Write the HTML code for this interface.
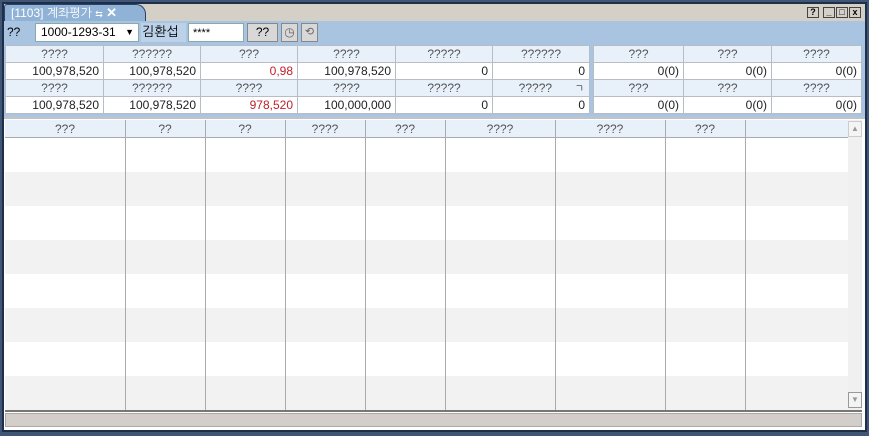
<!DOCTYPE html>
<html><head><meta charset="utf-8"><style>
*{margin:0;padding:0;box-sizing:border-box}
body{width:869px;height:436px;background:#3f5676;font-family:"Liberation Sans","NanumGothic",sans-serif;font-size:12px;position:relative;overflow:hidden}
.a{position:absolute}
.t{position:absolute;border-collapse:collapse;table-layout:fixed;background:#fff}
.t td{border:1px solid #b8bcc4;height:17px;padding:0 4px;font-size:12px;color:#222;white-space:nowrap}
.t tr.h td{background:#e8f0fa;text-align:center;color:#555}
.t tr.v td{text-align:right}
.r{color:#c0202a !important}
</style></head><body>
<div class="a" style="left:2px;top:2px;width:865px;height:430px;background:#fff;border:2px solid #1f2f4a"></div>
<!-- title -->
<div class="a" style="left:4px;top:4px;width:861px;height:17px;background:#d4d0c8"></div>
<div class="a" style="left:4px;top:4px;width:142px;height:17px;background:#8fb2d6;border:1px solid #2a4468;border-bottom:none;border-radius:3px 10px 0 0;color:#fff;font-size:12px;line-height:16px;padding-left:6px">[1103] 계좌평가 <span style="font-size:9px">⇆</span> <b style="font-size:13px">✕</b></div>
<div class="a" style="left:807px;top:7px;width:12px;height:11px;background:#d4d0c8;border:1px solid #444;font-size:9px;line-height:9px;text-align:center;font-weight:bold">?</div>
<div class="a" style="left:823px;top:7px;width:12px;height:11px;background:#d4d0c8;border:1px solid #444;font-size:9px;line-height:9px;text-align:center;font-weight:bold">_</div>
<div class="a" style="left:836px;top:7px;width:12px;height:11px;background:#d4d0c8;border:1px solid #444;font-size:9px;line-height:9px;text-align:center">□</div>
<div class="a" style="left:849px;top:7px;width:12px;height:11px;background:#d4d0c8;border:1px solid #444;font-size:9px;line-height:9px;text-align:center;font-weight:bold">x</div>
<!-- toolbar -->
<div class="a" style="left:4px;top:21px;width:861px;height:23px;background:#a9c4e0"></div>
<div class="a" style="left:7px;top:25px;font-size:12px">??</div>
<div class="a" style="left:35px;top:23px;width:104px;height:19px;background:#fff;border:1px solid #8aa;font-size:12px;line-height:17px;padding-left:5px">1000-1293-31 <span style="position:absolute;right:4px;font-size:9px">▼</span></div>
<div class="a" style="left:141px;top:23px;width:45px;height:19px;background:#bcd2e8;font-size:13px;line-height:18px;padding-left:1px">김환섭</div>
<div class="a" style="left:188px;top:23px;width:56px;height:19px;background:#fff;border:1px solid #8aa;font-size:11px;line-height:18px;padding-left:4px">****</div>
<div class="a" style="left:247px;top:23px;width:31px;height:19px;background:#d8d8d8;border:1px solid #888;font-size:12px;line-height:17px;text-align:center">??</div>
<div class="a" style="left:281px;top:23px;width:17px;height:19px;background:#d8d8d8;border:1px solid #888;font-size:12px;line-height:17px;text-align:center;color:#666">◷</div>
<div class="a" style="left:301px;top:23px;width:17px;height:19px;background:#d8d8d8;border:1px solid #888;font-size:11px;line-height:17px;text-align:center;color:#666">⟲</div>
<div class="a" style="left:4px;top:44px;width:861px;height:75px;background:#a9c4e0"></div>
<div class="a" style="left:4px;top:116px;width:861px;height:3px;background:#b9c4d0"></div>
<table class="t" style="left:5px;top:45px;width:584px">
<colgroup><col style="width:98px"><col style="width:97px"><col style="width:97px"><col style="width:98px"><col style="width:97px"><col style="width:97px"></colgroup>
<tr class="h"><td>????</td><td>??????</td><td>???</td><td>????</td><td>?????</td><td>??????</td></tr>
<tr class="v"><td>100,978,520</td><td>100,978,520</td><td class="r">0,98</td><td>100,978,520</td><td>0</td><td>0</td></tr>
<tr class="h"><td>????</td><td>??????</td><td>????</td><td>????</td><td>?????</td><td>????? <span style="float:right">ㄱ</span></td></tr>
<tr class="v"><td>100,978,520</td><td>100,978,520</td><td class="r">978,520</td><td>100,000,000</td><td>0</td><td>0</td></tr>
</table>
<table class="t" style="left:593px;top:45px;width:268px">
<colgroup><col style="width:90px"><col style="width:88px"><col style="width:90px"></colgroup>
<tr class="h"><td>???</td><td>???</td><td>????</td></tr>
<tr class="v"><td>0(0)</td><td>0(0)</td><td>0(0)</td></tr>
<tr class="h"><td>???</td><td>???</td><td>????</td></tr>
<tr class="v"><td>0(0)</td><td>0(0)</td><td>0(0)</td></tr>
</table>
<!-- main grid -->
<div class="a" style="left:5px;top:120px;width:857px;height:290px;background:#fff;overflow:hidden">
<div class="a" style="left:0;top:0;width:843px;height:18px;background:#e8f0fa;border-bottom:1px solid #aaa"></div>
<div class="a" style="left:0;top:52px;width:843px;height:34px;background:#f2f2f2"></div>
<div class="a" style="left:0;top:120px;width:843px;height:34px;background:#f2f2f2"></div>
<div class="a" style="left:0;top:188px;width:843px;height:34px;background:#f2f2f2"></div>
<div class="a" style="left:0;top:256px;width:843px;height:34px;background:#f2f2f2"></div>
<div class="a" style="left:120px;top:0;width:1px;height:290px;background:#aaa"></div>
<div class="a" style="left:200px;top:0;width:1px;height:290px;background:#aaa"></div>
<div class="a" style="left:280px;top:0;width:1px;height:290px;background:#aaa"></div>
<div class="a" style="left:360px;top:0;width:1px;height:290px;background:#aaa"></div>
<div class="a" style="left:440px;top:0;width:1px;height:290px;background:#aaa"></div>
<div class="a" style="left:550px;top:0;width:1px;height:290px;background:#aaa"></div>
<div class="a" style="left:660px;top:0;width:1px;height:290px;background:#aaa"></div>
<div class="a" style="left:740px;top:0;width:1px;height:290px;background:#aaa"></div>
<div class="a" style="top:2px;left:0;width:120px;text-align:center;color:#555">???</div>
<div class="a" style="top:2px;left:120px;width:80px;text-align:center;color:#555">??</div>
<div class="a" style="top:2px;left:200px;width:80px;text-align:center;color:#555">??</div>
<div class="a" style="top:2px;left:280px;width:80px;text-align:center;color:#555">????</div>
<div class="a" style="top:2px;left:360px;width:80px;text-align:center;color:#555">???</div>
<div class="a" style="top:2px;left:440px;width:110px;text-align:center;color:#555">????</div>
<div class="a" style="top:2px;left:550px;width:110px;text-align:center;color:#555">????</div>
<div class="a" style="top:2px;left:660px;width:80px;text-align:center;color:#555">???</div>
<div class="a" style="left:843px;top:0;width:14px;height:290px;background:#f0f0f0"></div>
<div class="a" style="left:843px;top:1px;width:14px;height:16px;background:#f4f4f4;border:1px solid #ccc;font-size:8px;color:#999;text-align:center;line-height:14px">▲</div>
<div class="a" style="left:843px;top:272px;width:14px;height:16px;background:#f4f4f4;border:1px solid #999;font-size:8px;color:#999;text-align:center;line-height:14px">▼</div>
</div>
<div class="a" style="left:5px;top:410px;width:857px;height:2px;background:#777"></div>
<div class="a" style="left:5px;top:413px;width:857px;height:14px;background:#d4ceca;border:1px solid #aaa"></div>
</body></html>
